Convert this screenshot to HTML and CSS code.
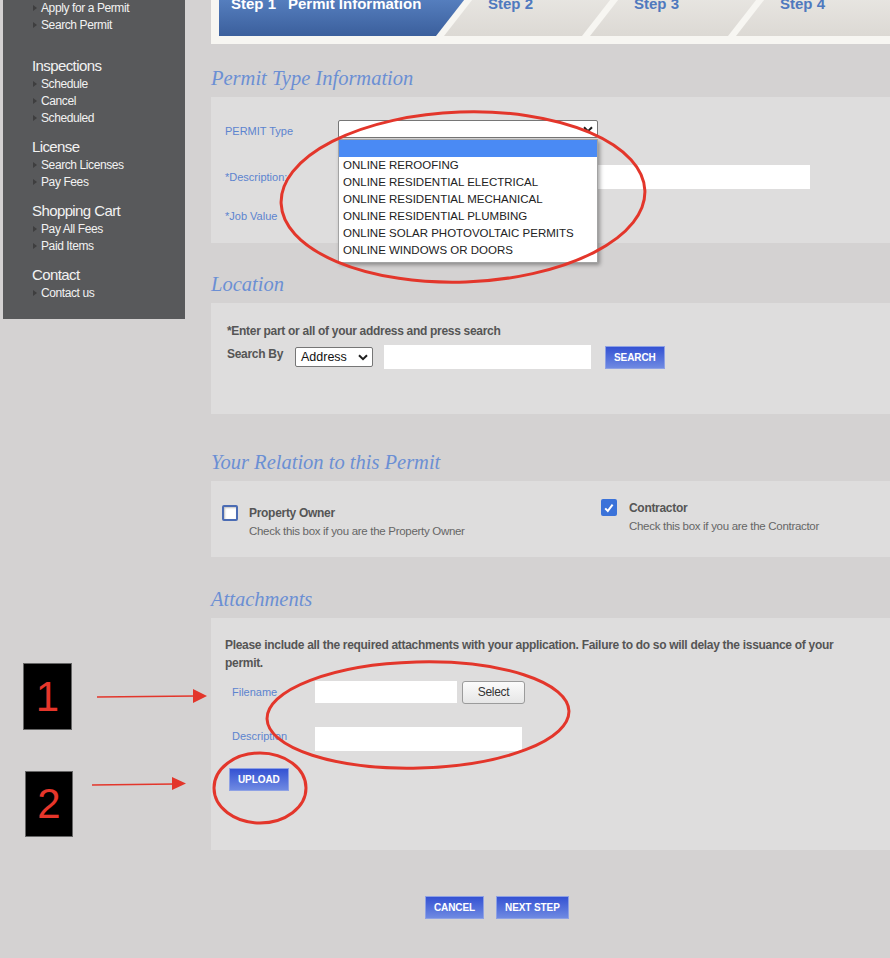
FILE: index.html
```html
<!DOCTYPE html>
<html>
	<head>
		<meta charset="utf-8">
		<title>Permit Information</title>
		<link rel="stylesheet" href="styles.css">
	</head>
	<body>
		<div class="page">
			<div class="sidebar">
				<div class="nav-group nav-group-first">
					<ul class="nav-list">
						<li><a href="#">Apply for a Permit</a></li>
						<li><a href="#">Search Permit</a></li>
					</ul>
				</div>
				<div class="nav-group">
					<div class="nav-title">Inspections</div>
					<ul class="nav-list">
						<li><a href="#">Schedule</a></li>
						<li><a href="#">Cancel</a></li>
						<li><a href="#">Scheduled</a></li>
					</ul>
				</div>
				<div class="nav-group">
					<div class="nav-title">License</div>
					<ul class="nav-list">
						<li><a href="#">Search Licenses</a></li>
						<li><a href="#">Pay Fees</a></li>
					</ul>
				</div>
				<div class="nav-group">
					<div class="nav-title">Shopping Cart</div>
					<ul class="nav-list">
						<li><a href="#">Pay All Fees</a></li>
						<li><a href="#">Paid Items</a></li>
					</ul>
				</div>
				<div class="nav-group">
					<div class="nav-title">Contact</div>
					<ul class="nav-list">
						<li><a href="#">Contact us</a></li>
					</ul>
				</div>
			</div>

			<div class="main">
				<div class="steps-frame">
					<div class="steps">
						<div class="step step-first active"><span class="step-no">Step 1</span>Permit Information</div>
						<div class="step">Step 2</div>
						<div class="step">Step 3</div>
						<div class="step step-last">Step 4</div>
					</div>
				</div>

				<div class="section section-permit">
					<h2 class="section-title">Permit Type Information</h2>
					<div class="panel panel-permit">
						<div class="form-row row-type">
							<label class="field-label">PERMIT Type</label>
							<div class="select select-permit">
								<svg class="chevron" width="10" height="7" viewBox="0 0 10 7"><path d="M1 1.2 L5 5.2 L9 1.2" fill="none" stroke="#1e1e1e" stroke-width="2"/></svg>
								<ul class="select-menu">
									<li class="selected">&nbsp;</li>
									<li>ONLINE REROOFING</li>
									<li>ONLINE RESIDENTIAL ELECTRICAL</li>
									<li>ONLINE RESIDENTIAL MECHANICAL</li>
									<li>ONLINE RESIDENTIAL PLUMBING</li>
									<li>ONLINE SOLAR PHOTOVOLTAIC PERMITS</li>
									<li>ONLINE WINDOWS OR DOORS</li>
								</ul>
							</div>
						</div>
						<div class="form-row row-desc">
							<label class="field-label">*Description:</label>
							<div class="text-input input-desc"></div>
						</div>
						<div class="form-row row-value">
							<label class="field-label">*Job Value</label>
							<div class="text-input input-value"></div>
						</div>
					</div>
				</div>

				<div class="section section-location">
					<h2 class="section-title">Location</h2>
					<div class="panel panel-location">
						<div class="hint">*Enter part or all of your address and press search</div>
						<div class="search-row">
							<span class="search-label">Search By</span>
							<div class="select select-address">Address
								<svg class="chevron" width="10" height="7" viewBox="0 0 10 7"><path d="M1 1.2 L5 5.2 L9 1.2" fill="none" stroke="#1e1e1e" stroke-width="2"/></svg>
							</div>
							<div class="text-input input-address"></div>
							<button class="btn btn-search">SEARCH</button>
						</div>
					</div>
				</div>

				<div class="section section-relation">
					<h2 class="section-title">Your Relation to this Permit</h2>
					<div class="panel panel-relation">
						<div class="relation relation-owner">
							<span class="checkbox"></span>
							<div class="relation-text">
								<div class="relation-name">Property Owner</div>
								<div class="relation-note">Check this box if you are the Property Owner</div>
							</div>
						</div>
						<div class="relation relation-contractor">
							<span class="checkbox checked">
								<svg width="12" height="12" viewBox="0 0 12 12"><path d="M2.2 6.4 L4.8 9 L9.6 2.6" fill="none" stroke="#fff" stroke-width="2"/></svg>
							</span>
							<div class="relation-text">
								<div class="relation-name">Contractor</div>
								<div class="relation-note">Check this box if you are the Contractor</div>
							</div>
						</div>
					</div>
				</div>

				<div class="section section-attach">
					<h2 class="section-title">Attachments</h2>
					<div class="panel panel-attach">
						<p class="attach-note">Please include all the required attachments with your application. Failure to do so will delay the issuance of your permit.</p>
						<div class="attach-row row-file">
							<label class="field-label">Filename</label>
							<div class="text-input input-file"></div>
							<button class="btn-plain">Select</button>
						</div>
						<div class="attach-row row-filedesc">
							<label class="field-label">Description</label>
							<div class="text-input input-filedesc"></div>
						</div>
						<button class="btn btn-upload">UPLOAD</button>
					</div>
				</div>

				<div class="actions">
					<button class="btn">CANCEL</button>
					<button class="btn">NEXT STEP</button>
				</div>
			</div>

			<!-- annotations drawn over the screenshot -->
			<div class="note-box note-one">1</div>
			<div class="note-box note-two">2</div>
			<svg class="marks" width="890" height="958" viewBox="0 0 890 958">
				<g fill="none" stroke="#e3362b" stroke-width="3">
					<ellipse cx="463" cy="197" rx="182" ry="85" transform="rotate(-2 463 197)"/>
					<ellipse cx="418" cy="715" rx="151" ry="53" transform="rotate(-1.5 418 715)"/>
					<ellipse cx="260" cy="788" rx="46" ry="35"/>
				</g>
				<g stroke="#e3362b" stroke-width="1.6">
					<line x1="97" y1="697" x2="196" y2="696"/>
					<line x1="92" y1="785" x2="175" y2="784"/>
				</g>
				<g fill="#e3362b">
					<polygon points="193,689 207,696 193,703"/>
					<polygon points="172,777 186,783.5 172,790"/>
				</g>
			</svg>
		</div>
	</body>
</html>
```

FILE: styles.css
```css
body{
	margin:0;
	background:#d4d2d2;
	font-family:"Liberation Sans", Arial, sans-serif;
	overflow:hidden;
}
.page{
	position:relative;
	display:flex;
	min-height:958px;
}

/* left menu */
.sidebar{
	width:182px;
	margin-left:3px;
	align-self:flex-start;
	box-sizing:border-box;
	padding:0 0 17px 29px;
	background:#58595b;
	color:#f2f2f2;
	font-family:"Liberation Sans", Arial, sans-serif;
}
.nav-group{
	margin-top:10px;
}
.nav-group-first{
	margin-top:0;
	margin-bottom:22px;
}
.nav-title{
	font-size:15px;
	line-height:20px;
	letter-spacing:-0.6px;
}
.nav-list{
	list-style:none;
	margin:0;
	padding:0 0 0 9px;
}
.nav-list li{
	position:relative;
	font-size:12px;
	line-height:17px;
	letter-spacing:-0.4px;
}
.nav-list li:before{
	content:"";
	position:absolute;
	left:-8px;
	top:5px;
	border-left:4px solid #3e3e3f;
	border-top:3.5px solid transparent;
	border-bottom:3.5px solid transparent;
}
.nav-list a{
	color:#f2f2f2;
	text-decoration:none;
}

.main{
	flex:1;
	min-width:0;
	margin-left:26px;
}

/* wizard steps */
.steps-frame{
	margin-top:-14px;
	padding:0 0 8px 8px;
	background:#f7f6f2;
}
.steps{
	display:flex;
	height:50px;
	overflow:hidden;
}
.step{
	width:177px;
	flex-shrink:0;
	margin-left:-31px;
	box-sizing:border-box;
	padding:8px 0 0 44px;
	background:linear-gradient(#ebe9e5, #dcd9d4);
	color:#4f79be;
	font-size:15px;
	font-weight:bold;
	line-height:20px;
	clip-path:polygon(39px 0, 100% 0, calc(100% - 39px) 100%, 0 100%);
}
.step-first{
	width:256px;
	margin-left:0;
	padding-left:12px;
	clip-path:polygon(0 0, 100% 0, calc(100% - 39px) 100%, 0 100%);
}
.step-last{
	flex:1;
	clip-path:polygon(39px 0, 100% 0, 100% 100%, 0 100%);
}
.step.active{
	background:linear-gradient(#5f8acb, #3b5f9c);
	color:#fff;
}
.step-no{
	margin-right:12px;
}

/* sections */
.section{
	margin-top:28px;
}
.section-permit{
	margin-top:21px;
}
.section-relation{
	margin-top:35px;
}
.section-attach{
	margin-top:29px;
}
.section-title{
	margin:0 0 6px;
	font-family:"Liberation Serif", Georgia, serif;
	font-style:italic;
	font-weight:normal;
	font-size:20.5px;
	line-height:26px;
	color:#6b8fd4;
}
.panel{
	background:#dedddd;
	color:#555;
	letter-spacing:-0.3px;
}
.field-label{
	font-size:11px;
	letter-spacing:0;
	color:#5c84cf;
}
.text-input{
	background:#fff;
	box-sizing:border-box;
}

/* permit type */
.panel-permit{
	padding:23px 0 16px 14px;
}
.form-row{
	display:flex;
	align-items:center;
}
.form-row .field-label{
	width:113px;
	flex-shrink:0;
}
.row-type{
	height:22px;
	align-items:flex-start;
}
.row-type .field-label{
	line-height:22px;
}
.row-desc{
	height:24px;
	margin-top:23px;
}
.row-value{
	height:23px;
	margin-top:15px;
}
.input-desc{
	width:472px;
	height:24px;
}
.input-value{
	width:200px;
	height:23px;
}
.select{
	position:relative;
	box-sizing:border-box;
	border:1px solid #767676;
	border-radius:2px;
	background:#fff;
}
.chevron{
	position:absolute;
	right:4px;
	top:50%;
	margin-top:-3px;
}
.select-permit{
	width:260px;
	height:18px;
}
.select-menu{
	position:absolute;
	z-index:2;
	left:-1px;
	top:18px;
	width:260px;
	margin:0;
	padding:0 0 3px;
	list-style:none;
	box-sizing:border-box;
	border:1px solid #a3a3a3;
	background:#fff;
	box-shadow:2px 2px 4px rgba(0,0,0,0.35);
	font-size:11.5px;
	line-height:17px;
	letter-spacing:0;
	color:#222;
}
.select-menu li{
	height:17px;
	padding-left:4px;
	white-space:nowrap;
}
.select-menu li.selected{
	background:#4a8af4;
}

/* location */
.panel-location{
	padding:20px 0 45px 16px;
}
.hint{
	font-size:12px;
	font-weight:bold;
	line-height:16px;
}
.search-row{
	display:flex;
	align-items:flex-start;
	height:24px;
	margin-top:6px;
}
.search-label{
	width:68px;
	font-size:12px;
	font-weight:bold;
	line-height:18px;
}
.select-address{
	width:78px;
	height:20px;
	margin-top:2px;
	padding-left:5px;
	font-size:12.5px;
	line-height:18px;
	letter-spacing:0;
	color:#111;
}
.input-address{
	width:207px;
	height:24px;
	margin-left:11px;
}
.btn-search{
	margin-top:1px;
	margin-left:14px;
}

/* buttons */
.btn{
	height:23px;
	padding:0 8px;
	border:1px solid #8ea1e4;
	background:linear-gradient(#3452d3, #6f8ae2);
	color:#fff;
	font-family:"Liberation Sans", Arial, sans-serif;
	font-size:10px;
	font-weight:bold;
	letter-spacing:-0.1px;
}
.btn-plain{
	width:63px;
	height:23px;
	margin-left:5px;
	border:1px solid #9b9b9b;
	border-radius:3px;
	background:linear-gradient(#fbfbfb, #e6e6e6);
	color:#333;
	font-family:"Liberation Sans", Arial, sans-serif;
	font-size:12px;
	letter-spacing:-0.3px;
}

/* relation */
.panel-relation{
	display:grid;
	grid-template-columns:379px 1fr;
	align-items:start;
	padding:0 0 17px 11px;
}
.relation{
	display:flex;
	align-items:flex-start;
}
.relation-owner{
	margin-top:23px;
}
.relation-contractor{
	margin-top:18px;
}
.checkbox{
	display:flex;
	align-items:center;
	justify-content:center;
	width:16px;
	height:16px;
	margin-top:1px;
	margin-right:11px;
	box-sizing:border-box;
	border:2px solid #4b6cb4;
	border-radius:2px;
	background:#fff;
	box-shadow:inset 1px 1px 2px rgba(0,0,0,0.25);
}
.checkbox.checked{
	height:17px;
	margin-top:0;
	margin-right:12px;
	border:none;
	background:#3a72d9;
	box-shadow:none;
}
.relation-name{
	font-size:12px;
	font-weight:bold;
	line-height:18px;
}
.relation-note{
	font-size:11.5px;
	line-height:18px;
	color:#666;
}

/* attachments */
.panel-attach{
	padding:18px 0 59px 14px;
}
.attach-note{
	margin:0;
	max-width:625px;
	font-size:12px;
	font-weight:bold;
	line-height:18px;
}
.attach-row{
	display:flex;
	align-items:center;
	height:24px;
	padding-left:7px;
}
.attach-row .field-label{
	width:83px;
	flex-shrink:0;
}
.row-file{
	margin-top:8px;
}
.row-filedesc{
	margin-top:23px;
	align-items:flex-start;
}
.row-filedesc .field-label{
	line-height:18px;
}
.input-file{
	width:142px;
	height:22px;
}
.input-filedesc{
	width:207px;
	height:24px;
}
.btn-upload{
	display:block;
	margin:17px 0 0 4px;
}

.actions{
	display:flex;
	gap:12px;
	margin-top:46px;
	padding-left:214px;
}

/* annotations */
.marks{
	position:absolute;
	left:0;
	top:0;
	z-index:5;
	pointer-events:none;
}
.note-box{
	position:absolute;
	z-index:5;
	display:flex;
	align-items:center;
	justify-content:center;
	width:49px;
	height:67px;
	box-sizing:border-box;
	border:1px solid #666;
	background:#000;
	color:#e6362b;
	font-family:"Liberation Sans", Arial, sans-serif;
	font-size:42px;
}
.note-one{
	left:23px;
	top:663px;
}
.note-two{
	left:25px;
	top:771px;
	width:48px;
	height:66px;
}
```
